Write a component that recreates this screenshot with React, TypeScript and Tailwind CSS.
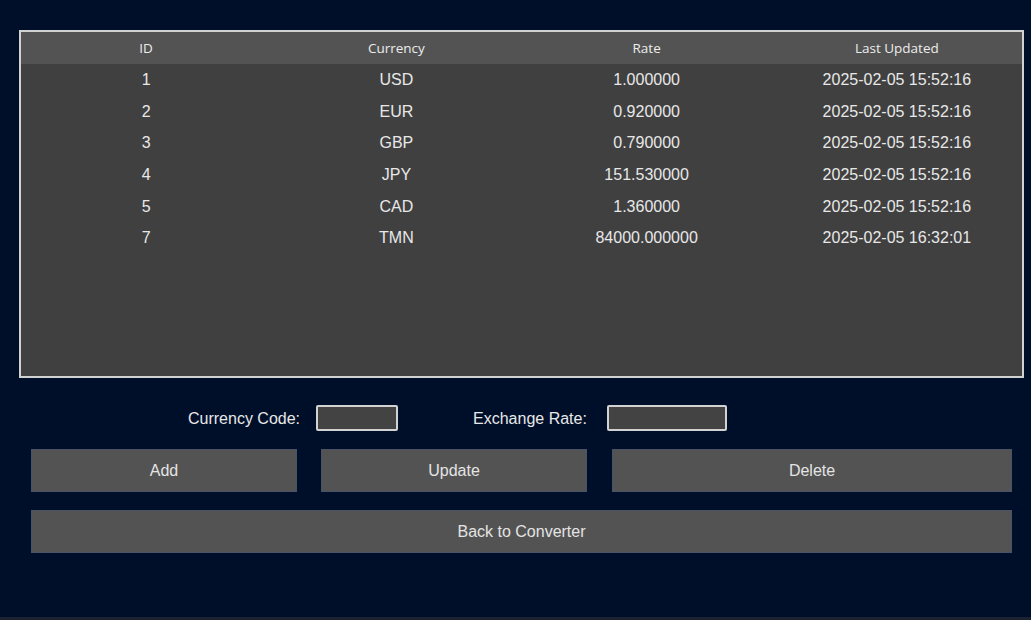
import React from "react";

const rows = [
  { id: "1", cur: "USD", rate: "1.000000", at: "2025-02-05 15:52:16" },
  { id: "2", cur: "EUR", rate: "0.920000", at: "2025-02-05 15:52:16" },
  { id: "3", cur: "GBP", rate: "0.790000", at: "2025-02-05 15:52:16" },
  { id: "4", cur: "JPY", rate: "151.530000", at: "2025-02-05 15:52:16" },
  { id: "5", cur: "CAD", rate: "1.360000", at: "2025-02-05 15:52:16" },
  { id: "7", cur: "TMN", rate: "84000.000000", at: "2025-02-05 16:32:01" },
];

const Btn: React.FC<{ label: string; className: string }> = ({ label, className }) => (
  <button
    className={`h-[43px] bg-[#535353] border border-[#4a5366] text-[16px] text-[#e4e4e4] ${className}`}
  >
    {label}
  </button>
);

export default function App() {
  return (
    <div
      className="w-[1031px] h-[620px] bg-[#000f29] flex flex-col border-b-[3px] border-[#1c2230] overflow-hidden"
      style={{ fontFamily: '"Liberation Sans", Arial, sans-serif' }}
    >
      <div className="ml-[19px] mt-[30px] w-[1005px] h-[348px] border-2 border-[#d2d2d2] bg-[#404040] flex flex-col">
        <div
          className="h-[32px] bg-[#535353] grid grid-cols-4 items-center text-[13.5px] text-[#ececec]"
          style={{ fontFamily: '"Open Sans", "Noto Sans", sans-serif' }}
        >
          <div className="text-center">ID</div>
          <div className="text-center">Currency</div>
          <div className="text-center">Rate</div>
          <div className="text-center">Last Updated</div>
        </div>
        {rows.map((r) => (
          <div key={r.id} className="h-[31.7px] grid grid-cols-4 items-center text-[16px] text-[#e8e8e8]">
            <div className="text-center">{r.id}</div>
            <div className="text-center">{r.cur}</div>
            <div className="text-center">{r.rate}</div>
            <div className="text-center">{r.at}</div>
          </div>
        ))}
      </div>

      <div className="mt-[27px] flex items-center h-[26px] text-[16px] text-[#e8e8e8]">
        <span className="ml-[188px] translate-y-[1px]">Currency Code:</span>
        <div className="ml-[16px] w-[82px] h-[26px] border-2 border-[#d2d2d2] rounded-[2px] bg-[#444343]" />
        <span className="ml-[75px] translate-y-[1px]">Exchange Rate:</span>
        <div className="ml-[20px] w-[120px] h-[26px] border-2 border-[#d2d2d2] rounded-[2px] bg-[#444343]" />
      </div>

      <div className="mt-[18px] ml-[31px] flex">
        <Btn label="Add" className="w-[266px]" />
        <Btn label="Update" className="ml-[24px] w-[266px]" />
        <Btn label="Delete" className="ml-[25px] w-[400px]" />
      </div>

      <div className="mt-[18px] ml-[31px] flex">
        <Btn label="Back to Converter" className="w-[981px]" />
      </div>
    </div>
  );
}
